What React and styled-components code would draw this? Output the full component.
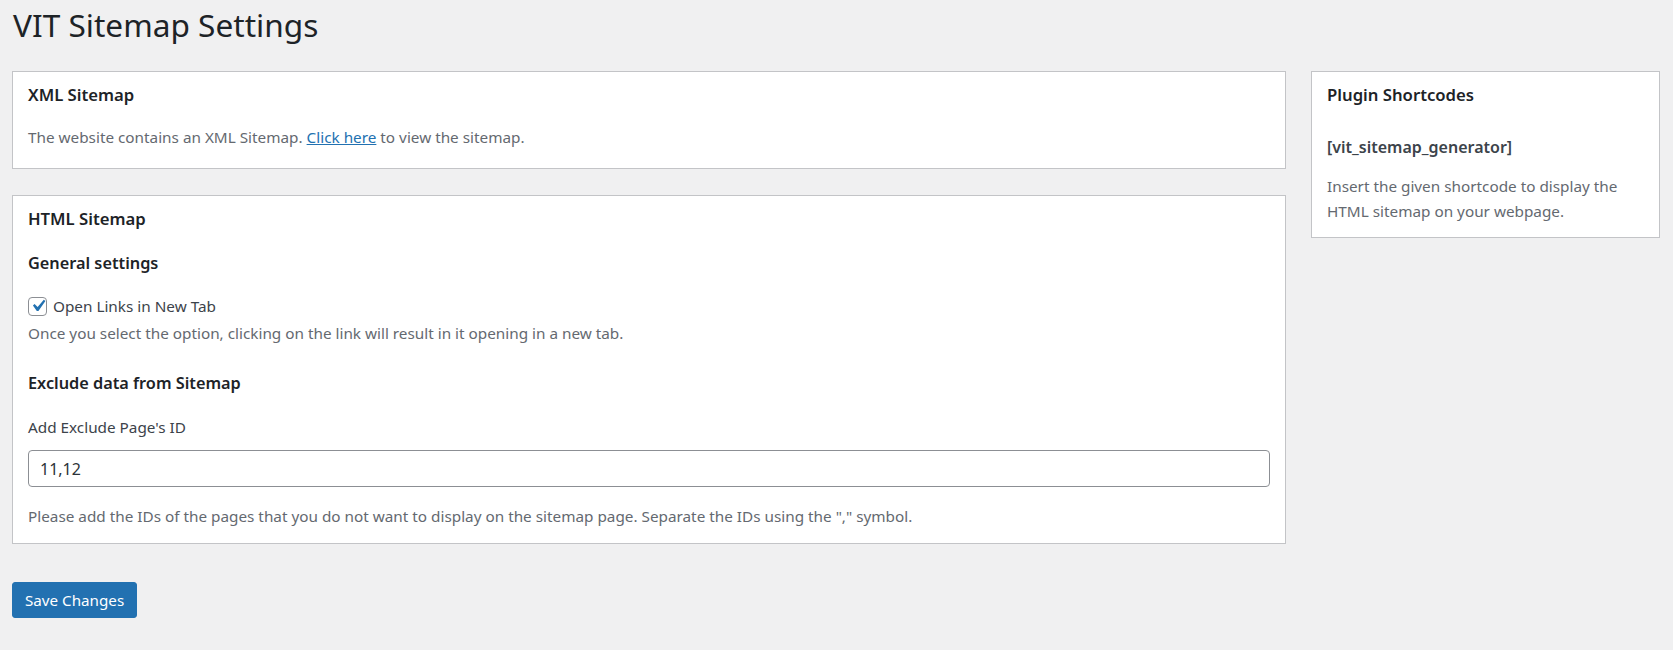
import React, { useState } from 'react';
import styled, { createGlobalStyle } from 'styled-components';

const GlobalStyle = createGlobalStyle`
  body {
    margin: 0;
    background: #f0f0f1;
    font-family: "Noto Sans", "Open Sans", sans-serif;
    color: #3c434a;
  }
`;

const Page = styled.div`
  padding: 0 13px 0 12px;
`;

const Title = styled.h1`
  margin: 0;
  padding: 5px 0 0 1px;
  font-size: 31.6px;
  font-weight: 400;
  line-height: 40px;
  color: #1d2327;
`;

const Columns = styled.div`
  display: grid;
  grid-template-columns: 1fr 349px;
  gap: 25px;
  align-items: start;
  margin-top: 26px;
`;

const MainColumn = styled.div`
  display: flex;
  flex-direction: column;
  gap: 26px;
`;

const Card = styled.div`
  background: #fff;
  border: 1px solid #c3c4c7;
  padding: 11px 15px ${(p) => p.$bottom || 14}px;
`;

const CardTitle = styled.h2`
  margin: 0;
  font-size: 16.7px;
  font-weight: 600;
  line-height: 24px;
  color: #1d2327;
`;

const SubTitle = styled.h3`
  margin: ${(p) => p.$top || 20}px 0 0;
  font-size: 16.3px;
  font-weight: 600;
  line-height: 24px;
  color: #1d2327;
`;

const Text = styled.p`
  margin: ${(p) => p.$top || 0}px 0 0;
  font-size: 15.3px;
  line-height: 25px;
  color: #646970;
`;

const Link = styled.a`
  color: #2271b1;
  text-decoration: underline;
`;

const CheckRow = styled.label`
  display: flex;
  align-items: center;
  gap: 6px;
  margin-top: 19px;
  font-size: 15.3px;
  line-height: 24px;
  color: #3c434a;
`;

const CheckBox = styled.span`
  box-sizing: border-box;
  flex-shrink: 0;
  width: 19px;
  height: 19px;
  border: 1px solid #8c8f94;
  border-radius: 4px;
  background: #fff;
  display: flex;
  align-items: center;
  justify-content: center;

  svg {
    flex-shrink: 0;
  }
`;

const FieldLabel = styled.div`
  margin-top: 20px;
  font-size: 15.3px;
  line-height: 25px;
  color: #3c434a;
`;

const TextInput = styled.input`
  display: block;
  box-sizing: border-box;
  width: 100%;
  height: 37px;
  margin-top: 10px;
  padding: 0 11px;
  border: 1px solid #8c8f94;
  border-radius: 4px;
  font-family: inherit;
  font-size: 16px;
  color: #2c3338;
  outline: none;
`;

const Shortcode = styled.div`
  margin-top: 28px;
  font-size: 16px;
  font-weight: 600;
  line-height: 24px;
  color: #3c434a;
`;

const SaveButton = styled.button`
  align-self: flex-start;
  margin-top: 12px;
  height: 36px;
  padding: 0 12px;
  background: #2271b1;
  border: 1px solid #2271b1;
  border-radius: 3px;
  color: #fff;
  font-family: inherit;
  font-size: 15.2px;
  cursor: pointer;
`;

const Check = () => (
  <svg width="24" height="24" viewBox="0 0 20 20">
    <path d="M14.83 4.89l1.34.94-5.81 8.38H9.02L5.78 9.67l1.34-1.25 2.57 2.4z" fill="#2271b1" />
  </svg>
);

export default function App() {
  const [ids, setIds] = useState('11,12');

  return (
    <Page>
      <GlobalStyle />
      <Title>VIT Sitemap Settings</Title>
      <Columns>
        <MainColumn>
          <Card $bottom={18}>
            <CardTitle>XML Sitemap</CardTitle>
            <Text $top={18}>
              The website contains an XML Sitemap. <Link href="#">Click here</Link> to view the sitemap.
            </Text>
          </Card>

          <Card $bottom={14}>
            <CardTitle>HTML Sitemap</CardTitle>
            <SubTitle $top={20}>General settings</SubTitle>
            <CheckRow>
              <CheckBox><Check /></CheckBox>
              Open Links in New Tab
            </CheckRow>
            <Text $top={3}>Once you select the option, clicking on the link will result in it opening in a new tab.</Text>
            <SubTitle $top={25}>Exclude data from Sitemap</SubTitle>
            <FieldLabel>Add Exclude Page's ID</FieldLabel>
            <TextInput value={ids} onChange={(e) => setIds(e.target.value)} />
            <Text $top={17}>Please add the IDs of the pages that you do not want to display on the sitemap page. Separate the IDs using the "," symbol.</Text>
          </Card>

          <SaveButton>Save Changes</SaveButton>
        </MainColumn>

        <Card $bottom={13}>
          <CardTitle>Plugin Shortcodes</CardTitle>
          <Shortcode>[vit_sitemap_generator]</Shortcode>
          <Text $top={15}>Insert the given shortcode to display the HTML sitemap on your webpage.</Text>
        </Card>
      </Columns>
    </Page>
  );
}
